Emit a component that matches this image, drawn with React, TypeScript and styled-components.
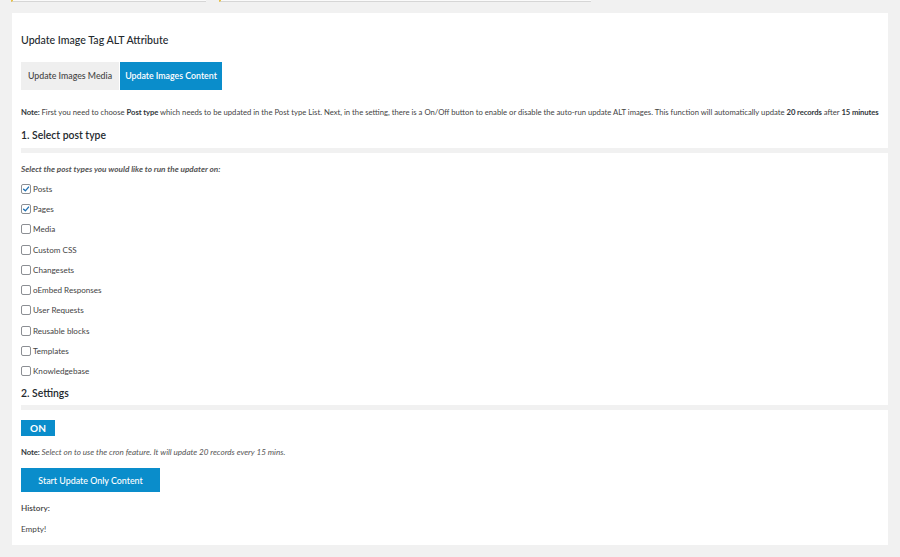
import styled, { createGlobalStyle } from "styled-components";

const GlobalStyle = createGlobalStyle`
  html, body {
    margin: 0;
    padding: 0;
    background: #f1f1f1;
    font-family: "Segoe UI", Lato, "Open Sans", sans-serif;
    color: #3c434a;
  }
`;

const Page = styled.div`
  width: 900px;
  height: 557px;
  overflow: hidden;
`;

const TopStrip = styled.div`
  display: flex;
  gap: 13px;
  padding-left: 11px;
  height: 3px;
`;

const CutField = styled.div<{ $width: number }>`
  width: ${(p) => p.$width}px;
  height: 2px;
  border-bottom: 1px solid #d6d6d6;
  border-left: 2px solid #e8c24a;
  background: #fafafa;
  box-sizing: border-box;
`;

const Panel = styled.div`
  margin: 10px 0 0 12px;
  width: 876px;
  height: 532px;
  box-sizing: border-box;
  background: #fff;
  padding: 20px 0 10px 9px;
  display: flex;
  flex-direction: column;
  overflow: hidden;
`;

const Title = styled.h1`
  margin: 0;
  font-size: 10.6px;
  line-height: 14px;
  font-weight: 500;
  color: #23282d;
`;

const Tabs = styled.div`
  display: flex;
  margin-top: 15px;
  height: 28px;
`;

const Tab = styled.div<{ $active?: boolean }>`
  display: flex;
  align-items: center;
  justify-content: center;
  width: ${(p) => (p.$active ? 102 : 98)}px;
  margin-right: ${(p) => (p.$active ? 0 : 1)}px;
  font-size: 8.8px;
  font-weight: ${(p) => (p.$active ? 600 : 500)};
  background: ${(p) => (p.$active ? "#0a8dcb" : "#efefef")};
  color: ${(p) => (p.$active ? "#fff" : "#444")};
`;

const Note = styled.p<{ $top: number }>`
  margin: ${(p) => p.$top}px 0 0;
  font-size: 7.7px;
  line-height: 12px;
  white-space: nowrap;
  color: #444;

  b {
    font-weight: 700;
    letter-spacing: -0.1px;
    color: #32373c;
  }

  em {
    font-size: 8.1px;
    color: #555;
  }
`;

const SectionHead = styled.h2<{ $top: number }>`
  margin: ${(p) => p.$top}px 0 0;
  font-size: 10.4px;
  line-height: 16px;
  font-weight: 600;
  color: #23282d;
`;

const Divider = styled.div<{ $top: number }>`
  margin-top: ${(p) => p.$top}px;
  height: 5px;
  background: #f1f1f1;
`;

const Hint = styled.p`
  margin: 10px 0 4px;
  font-size: 8.2px;
  line-height: 12px;
  font-style: italic;
  font-weight: 700;
  color: #555;
`;

const CheckRow = styled.label`
  display: flex;
  align-items: center;
  gap: 2px;
  height: 20.22px;
  font-size: 8.1px;
  color: #444;
`;

const Box = styled.span`
  display: flex;
  align-items: center;
  justify-content: center;
  width: 8px;
  height: 8px;
  border: 1px solid #8c8f94;
  border-radius: 2px;
  background: #fff;
`;

const OnButton = styled.div`
  margin-top: 10px;
  width: 34px;
  height: 16px;
  display: flex;
  align-items: center;
  justify-content: center;
  background: #0a8dcb;
  color: #fff;
  font-size: 10px;
  font-weight: 700;
`;

const StartButton = styled.div`
  margin-top: 10px;
  width: 139px;
  height: 24px;
  display: flex;
  align-items: center;
  justify-content: center;
  background: #0a8dcb;
  color: #fff;
  font-size: 8.9px;
  font-weight: 500;
`;

const Label = styled.p<{ $top: number; $bold?: boolean }>`
  margin: ${(p) => p.$top}px 0 0;
  font-size: 8.2px;
  line-height: 12px;
  font-weight: ${(p) => (p.$bold ? 600 : 400)};
  color: #444;
`;

const postTypes = [
  { name: "Posts", checked: true },
  { name: "Pages", checked: true },
  { name: "Media" },
  { name: "Custom CSS" },
  { name: "Changesets" },
  { name: "oEmbed Responses" },
  { name: "User Requests" },
  { name: "Reusable blocks" },
  { name: "Templates" },
  { name: "Knowledgebase" },
];

function Check() {
  return (
    <svg width="8" height="8" viewBox="0 0 10 10">
      <path
        d="M2 5.2 L4.2 7.3 L8.2 2.6"
        fill="none"
        stroke="#2271b1"
        strokeWidth="1.7"
        strokeLinecap="round"
        strokeLinejoin="round"
      />
    </svg>
  );
}

export default function App() {
  return (
    <Page>
      <GlobalStyle />
      <TopStrip>
        <CutField $width={195} />
        <CutField $width={372} />
      </TopStrip>
      <Panel>
        <Title>Update Image Tag ALT Attribute</Title>
        <Tabs>
          <Tab>Update Images Media</Tab>
          <Tab $active>Update Images Content</Tab>
        </Tabs>
        <Note $top={16}>
          <b>Note:</b> First you need to choose <b>Post type</b> which needs to
          be updated in the Post type List. Next, in the setting, there is a
          On/Off button to enable or disable the auto-run update ALT images.
          This function will automatically update <b>20 records</b> after{" "}
          <b>15 minutes</b>
        </Note>
        <SectionHead $top={9}>1. Select post type</SectionHead>
        <Divider $top={5} />
        <Hint>Select the post types you would like to run the updater on:</Hint>
        {postTypes.map((t) => (
          <CheckRow key={t.name}>
            <Box>{t.checked && <Check />}</Box>
            {t.name}
          </CheckRow>
        ))}
        <SectionHead $top={4}>2. Settings</SectionHead>
        <Divider $top={4} />
        <OnButton>ON</OnButton>
        <Note $top={10}>
          <b>Note:</b>{" "}
          <em>
            Select on to use the cron feature. It will update 20 records every
            15 mins.
          </em>
        </Note>
        <StartButton>Start Update Only Content</StartButton>
        <Label $top={10} $bold>
          History:
        </Label>
        <Label $top={9}>Empty!</Label>
      </Panel>
    </Page>
  );
}
